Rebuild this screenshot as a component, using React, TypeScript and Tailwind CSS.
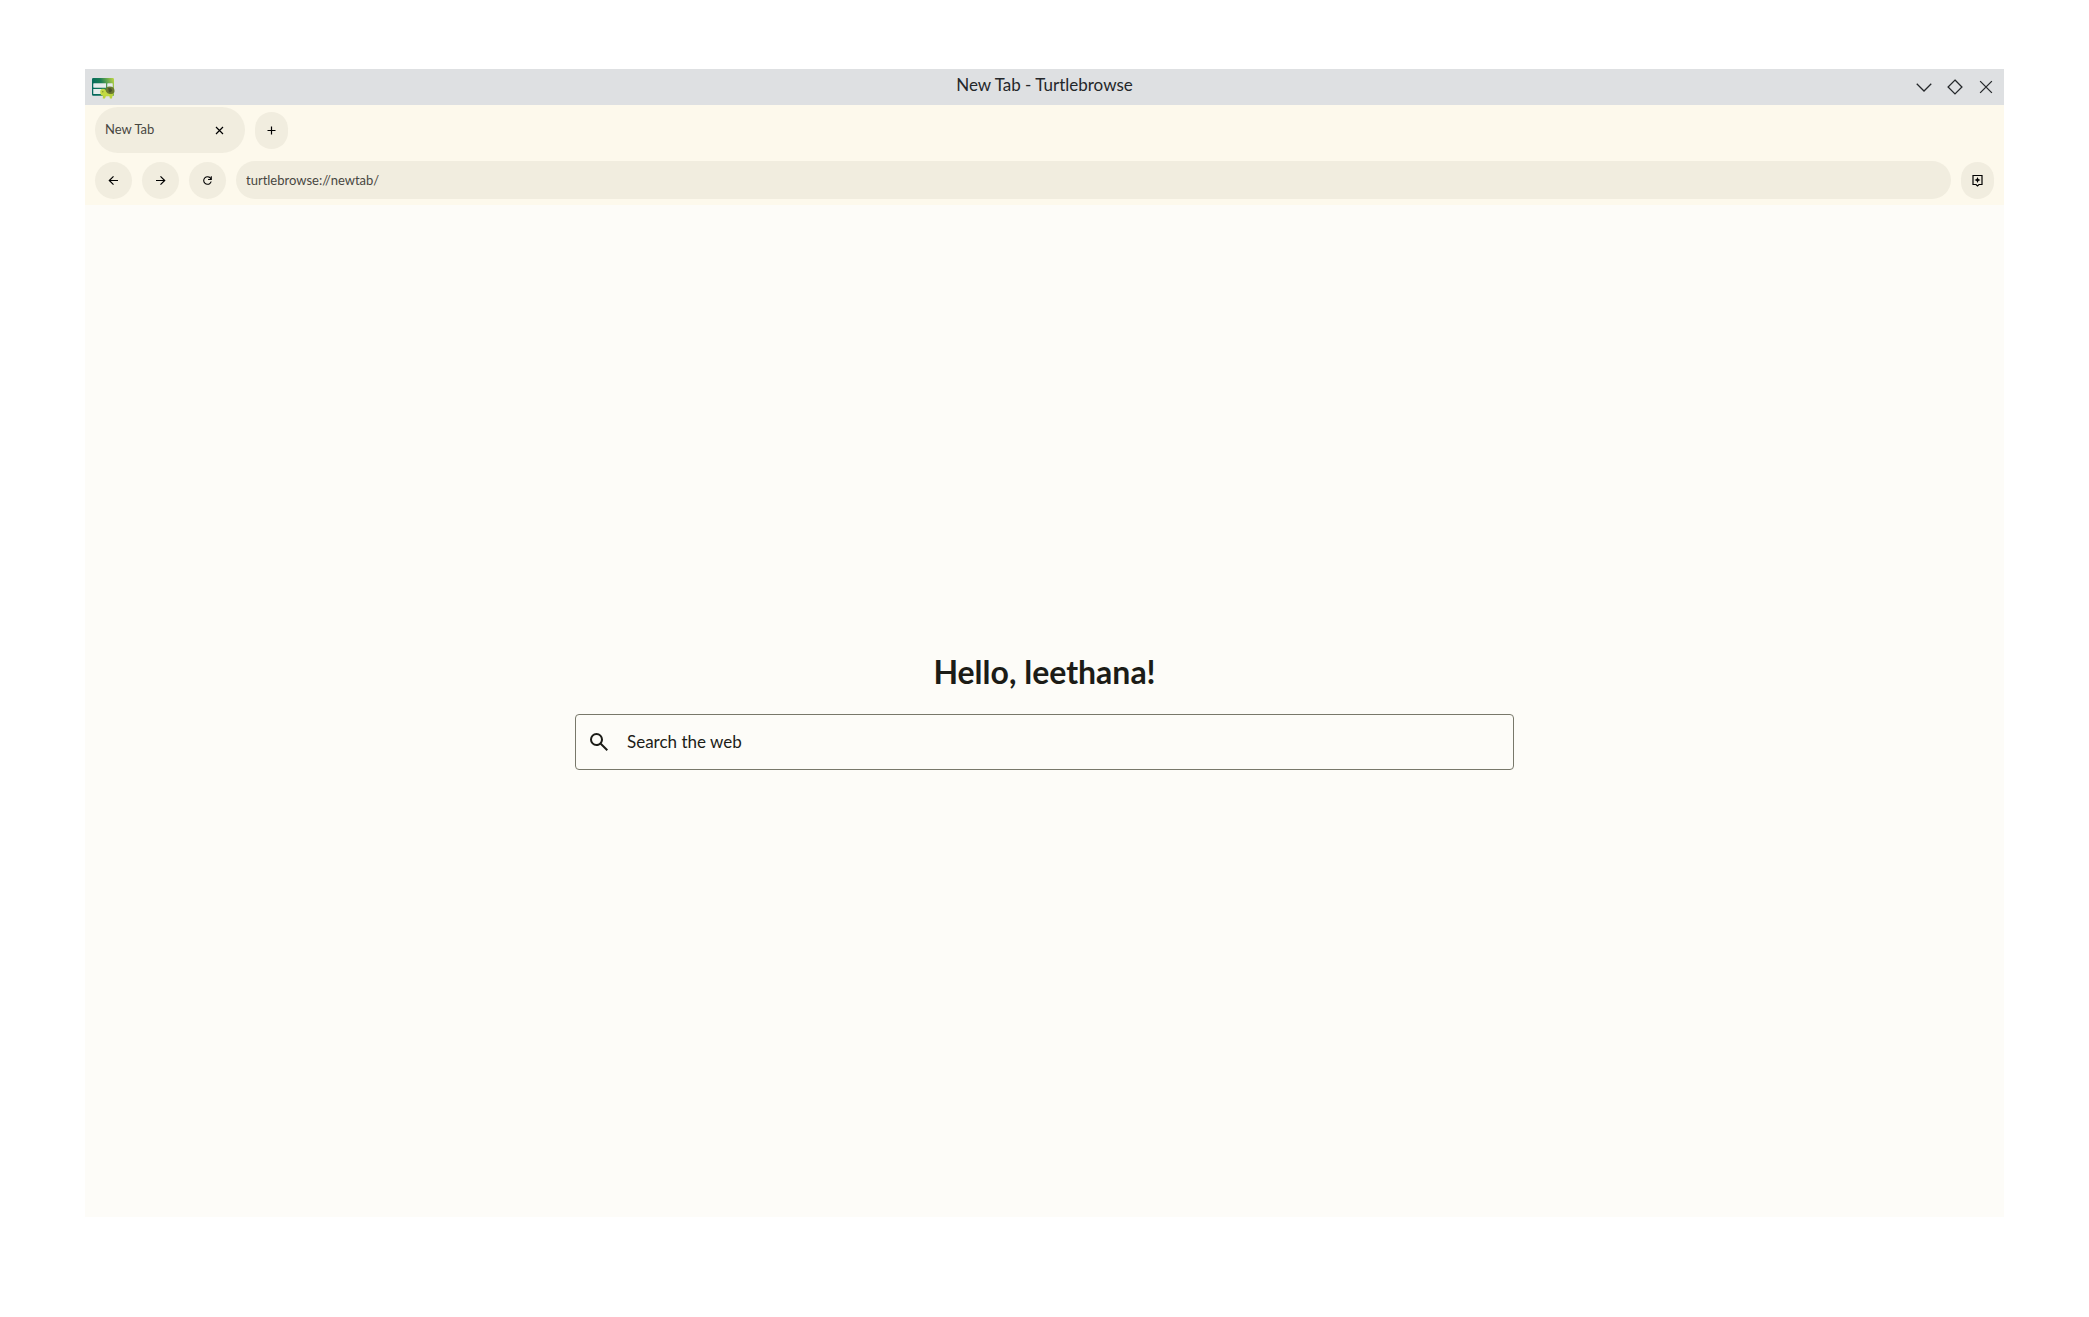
import type { ReactNode } from "react";

function AppLogo() {
  return (
    <svg viewBox="0 0 24 24" className="size-6" aria-hidden="true">
      <defs>
        <linearGradient id="frame" x1="0" y1="0.3" x2="1" y2="0">
          <stop offset="0" stopColor="#04695c" />
          <stop offset="0.4" stopColor="#1a7d55" />
          <stop offset="1" stopColor="#c0d844" />
        </linearGradient>
      </defs>
      <path
        fillRule="evenodd"
        fill="url(#frame)"
        d="M2.200 3h19.600q1.200 0 1.200 1.200v16.600H2.200q-1.200 0-1.200-1.200V4.200Q1 3 2.200 3zM2.500 8.500v4h12.500v-4zM16.500 8.500v4h5v-4zM2.500 14v5h9v-5z"
      />
      <path d="M2.500 8.500h12.500v4H2.500zM16.500 8.500h5v4h-5zM2.500 14h9v5h-9z" fill="#e6eceb" />
      <path d="M12 18h11l-1.500 3-.6 2.500h-2l-.5-2.300h-3.600L14 23.500h-2.200z" fill="#b9d23c" />
      <path d="M14 17q0-5.500 4.800-5.500 4.700 0 4.700 4.500 0 2.500-3 3h-4z" fill="#6b7a30" />
      <path d="M17.200 13l2.800.2 1.200 2-1.300 2.100h-2z" fill="#48522a" />
      <path d="M9.200 17.300q-.2-3.300 2.800-3.500 2.700 0 3 2.800.8 2.200 4.200 2.600l-1 1.600h-5.700q-3.200.1-3.300-3.500z" fill="#c3da42" />
      <circle cx="11.800" cy="16.800" r="0.700" fill="#7c8a34" />
    </svg>
  );
}

function Stroke({ children, className = "size-[15px]" }: { children: ReactNode; className?: string }) {
  return (
    <svg viewBox="0 0 15 15" className={className} fill="none" stroke="currentColor" strokeWidth={1.2} aria-hidden="true">
      {children}
    </svg>
  );
}

function RoundButton({ label, narrow = false, children }: { label: string; narrow?: boolean; children: ReactNode }) {
  return (
    <button
      type="button"
      aria-label={label}
      className={`flex h-[37px] shrink-0 items-center justify-center rounded-full bg-[#f1eddf] text-black ${narrow ? "w-[33px]" : "w-[37px]"}`}
    >
      {children}
    </button>
  );
}

function TitleBar() {
  return (
    <header className="grid h-9 grid-cols-[1fr_auto_1fr] items-center bg-[#dee0e2] text-[#24272a]">
      <div className="pl-1.5">
        <AppLogo />
      </div>
      <p className="pb-1 text-[17px] leading-6">New Tab - Turtlebrowse</p>
      <div className="flex justify-end gap-[15px] pr-2.5">
        <button type="button" aria-label="Minimize">
          <Stroke className="size-4"><path d="M.7 4.500l6.800 6.800 6.800-6.800" /></Stroke>
        </button>
        <button type="button" aria-label="Maximize">
          <Stroke className="size-4"><path d="M7.500 1l6.500 6.500L7.500 14 1 7.500z" /></Stroke>
        </button>
        <button type="button" aria-label="Close window">
          <Stroke className="size-4"><path d="M2 2l11 11M13 2L2 13" /></Stroke>
        </button>
      </div>
    </header>
  );
}

function TabStrip() {
  return (
    <div className="flex items-center gap-2.5">
      <div className="flex h-[46px] w-[150px] items-center justify-between rounded-full bg-[#f1eddf] pr-[18px] pl-2.5">
        <span className="text-[13px] text-[#48473f]">New Tab</span>
        <button type="button" aria-label="Close tab" className="text-black">
          <Stroke><path d="M4 4l7 7M11 4l-7 7" /></Stroke>
        </button>
      </div>
      <RoundButton label="New tab" narrow>
        <Stroke><path d="M7.500 3.500v8M3.500 7.500h8" /></Stroke>
      </RoundButton>
    </div>
  );
}

function NavBar() {
  return (
    <nav className="flex items-center gap-2.5">
      <RoundButton label="Back">
        <Stroke><path d="M12 7.500H3.700M7.500 3.300L3.300 7.500l4.200 4.200" /></Stroke>
      </RoundButton>
      <RoundButton label="Forward">
        <Stroke><path d="M3 7.500h8.300M7.500 3.300l4.200 4.200-4.200 4.200" /></Stroke>
      </RoundButton>
      <RoundButton label="Reload">
        <svg viewBox="0 0 24 24" className="size-[13px]" fill="currentColor" aria-hidden="true">
          <path d="M12 20q-3.350 0-5.675-2.325T4 12q0-3.350 2.325-5.675T12 4q1.725 0 3.300.713T18 6.750V4h2v7h-7V9h4.200q-.8-1.400-2.187-2.200T12 6Q9.500 6 7.750 7.750T6 12q0 2.500 1.750 4.250T12 18q1.925 0 3.475-1.100T17.650 14h2.100q-.7 2.650-2.850 4.325T12 20Z" />
        </svg>
      </RoundButton>
      <input
        type="text"
        aria-label="Address"
        defaultValue="turtlebrowse://newtab/"
        className="h-[38px] min-w-0 flex-1 rounded-full bg-[#f1eddf] px-2.5 text-[13px] text-[#48473f] outline-none"
      />
      <RoundButton label="Assistant" narrow>
        <Stroke>
          <path d="M3 2.500h9v9H9L7.500 13 6 11.500H3z" />
          <path d="M7.500 4l.9 2.100 2.100.9-2.100.9-.9 2.100-.9-2.100L4.500 7l2.100-.9z" fill="currentColor" stroke="none" />
        </Stroke>
      </RoundButton>
    </nav>
  );
}

function NewTabPage() {
  return (
    <main className="flex flex-1 flex-col items-center justify-center gap-[22px] bg-[#fdfcf8] text-[#1c1c17]">
      <h1 className="text-[32px] leading-10 font-bold">Hello, leethana!</h1>
      <label className="flex h-14 w-[939px] max-w-full items-center gap-4 rounded-sm border border-[#78786a] px-[11px]">
        <svg viewBox="0 0 24 24" className="size-6 shrink-0" fill="currentColor" aria-hidden="true">
          <path d="M19.600 21l-6.300-6.300q-.75.600-1.725.950T9.500 16q-2.725 0-4.612-1.887T3 9.500q0-2.725 1.888-4.612T9.500 3q2.725 0 4.613 1.888T16 9.500q0 1.100-.35 2.075T14.700 13.300l6.300 6.300-1.400 1.400ZM9.500 14q1.875 0 3.188-1.312T14 9.500q0-1.875-1.312-3.187T9.500 5Q7.625 5 6.313 6.313T5 9.500q0 1.875 1.313 3.188T9.500 14Z" />
        </svg>
        <input
          type="text"
          aria-label="Search the web"
          placeholder="Search the web"
          className="min-w-0 flex-1 bg-transparent text-[17px] outline-none placeholder:text-[#1c1c17]"
        />
      </label>
    </main>
  );
}

export default function App() {
  return (
    <div className="flex min-h-screen flex-col bg-white px-[85px] pt-[69px] pb-[100px] font-['Lato',sans-serif]">
      <div className="flex flex-1 flex-col">
        <TitleBar />
        <div className="flex flex-col gap-2 bg-[#fdf9ec] px-2.5 pt-0.5 pb-1.5">
          <TabStrip />
          <NavBar />
        </div>
        <NewTabPage />
      </div>
    </div>
  );
}
